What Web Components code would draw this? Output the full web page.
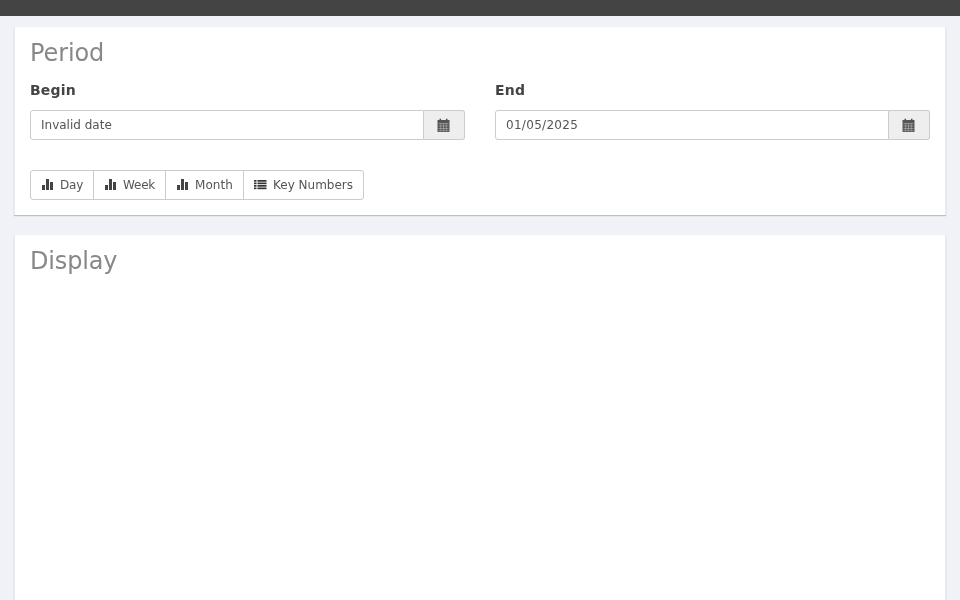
<!DOCTYPE html>
<html>
<head>
<meta charset="utf-8">
<title>Period</title>
<style>
    html, body { margin: 0; height: 100%; overflow: hidden; }
    body {
        background-color: #f1f2f7;
        font-family: "DejaVu Sans", sans-serif;
        color: #444;
    }
    main { display: flex; flex-direction: column; gap: 20px; padding: 11px 15px 0; will-change: transform; }
</style>
</head>
<body>
<top-bar></top-bar>
<main>
    <panel-box heading="Period" style="--heading-spacing:-0.1px">
        <div style="display:grid;grid-template-columns:1fr 1fr;column-gap:30px">
            <date-field label="Begin" value="Invalid date"></date-field>
            <date-field label="End" value="01/05/2025" style="--value-spacing:0.3px"></date-field>
        </div>
        <button-group style="margin-top:30px">
            <group-button icon="bars" style="letter-spacing:-0.2px">Day</group-button>
            <group-button icon="bars" style="letter-spacing:-0.25px">Week</group-button>
            <group-button icon="bars" style="letter-spacing:0.08px">Month</group-button>
            <group-button icon="list">Key Numbers</group-button>
        </button-group>
    </panel-box>
    <panel-box heading="Display" style="height:500px;--heading-spacing:-0.15px"></panel-box>
</main>
<script>
const ICONS = {
    bars: `<svg width="12" height="12" viewBox="0 0 12 12" fill="#444"><rect x="0" y="6" width="3" height="5"/><rect x="4" y="0" width="3" height="11"/><rect x="8" y="3" width="3" height="8"/></svg>`,
    list: `<svg width="12" height="12" viewBox="0 0 12 12" fill="#333" style="overflow:visible"><rect x="-1" y="1" width="2.5" height="1.7"/><rect x="2.5" y="1" width="9" height="1.7"/><rect x="-1" y="3.5" width="2.5" height="1.7"/><rect x="2.5" y="3.5" width="9" height="1.7"/><rect x="-1" y="6" width="2.5" height="1.7"/><rect x="2.5" y="6" width="9" height="1.7"/><rect x="-1" y="8.5" width="2.5" height="1.7"/><rect x="2.5" y="8.5" width="9" height="1.7"/></svg>`,
    calendar: `<svg width="13" height="14" viewBox="0 0 13 14"><path fill="#555" d="M0.5 2h2V0.8h1.6V2h4.8V0.8h1.6V2h2v12H.5z"/><path stroke="#aaa" stroke-width=".7" fill="none" d="M1.5 5.5h10M1.5 8h10M1.5 10.5h10M1.5 12.8h10M3.7 5.5v7.5M6.5 5.5v7.5M9.3 5.5v7.5"/></svg>`
};

class TopBar extends HTMLElement {
    constructor() {
        super();
        this.attachShadow({ mode: 'open' });
        this.shadowRoot.innerHTML = `
            <style>
                :host { display: block; height: 16px; background-color: #444; }
            </style>
        `;
    }
}

class PanelBox extends HTMLElement {
    constructor() {
        super();
        this.attachShadow({ mode: 'open' });
        this.shadowRoot.innerHTML = `
            <style>
                :host {
                    display: block;
                    background-color: #fff;
                    padding: 0 15px 15px;
                    border-left: 1px solid #e9eaef;
                    border-right: 1px solid #e9eaef;
                    margin: 0 -1px;
                    box-shadow: 0 1px 1px rgba(0, 0, 0, 0.22);
                }
                h2 {
                    margin: 0 0 14px;
                    padding-top: 12px;
                    font-size: 24px;
                    line-height: 29px;
                    font-weight: normal;
                    color: #888;
                    letter-spacing: var(--heading-spacing, 0);
                }
            </style>
            <h2>${this.getAttribute('heading')}</h2>
            <slot></slot>
        `;
    }
}

class DateField extends HTMLElement {
    constructor() {
        super();
        this.attachShadow({ mode: 'open' });
        this.shadowRoot.innerHTML = `
            <style>
                :host { display: block; }
                label {
                    display: block;
                    font-size: 14px;
                    font-weight: bold;
                    line-height: 17px;
                    margin-bottom: 11px;
                    letter-spacing: 0.2px;
                    color: #444;
                }
                .row { display: flex; height: 30px; box-sizing: border-box; }
                .value {
                    flex: 1;
                    border: 1px solid #ccc;
                    border-radius: 3px 0 0 3px;
                    padding: 0 10px;
                    font-size: 12px;
                    line-height: 28px;
                    color: #555;
                    background-color: #fff;
                    letter-spacing: var(--value-spacing, 0);
                }
                .addon {
                    width: 39px;
                    padding-right: 1px;
                    border: 1px solid #ccc;
                    border-left: 0;
                    border-radius: 0 3px 3px 0;
                    background-color: #eee;
                    display: flex;
                    align-items: center;
                    justify-content: center;
                }
            </style>
            <label>${this.getAttribute('label')}</label>
            <div class="row">
                <div class="value">${this.getAttribute('value')}</div>
                <div class="addon">${ICONS.calendar}</div>
            </div>
        `;
    }
}

class ButtonGroup extends HTMLElement {
    constructor() {
        super();
        this.attachShadow({ mode: 'open' });
        this.shadowRoot.innerHTML = `
            <style>
                :host {
                    display: inline-flex;
                    border: 1px solid #ccc;
                    border-radius: 3px;
                    height: 30px;
                    box-sizing: border-box;
                    vertical-align: top;
                }
                ::slotted(group-button:not(:last-child)) { border-right: 1px solid #ccc; }
            </style>
            <slot></slot>
        `;
    }
}

class GroupButton extends HTMLElement {
    constructor() {
        super();
        this.attachShadow({ mode: 'open' });
        this.shadowRoot.innerHTML = `
            <style>
                :host {
                    display: flex;
                    align-items: center;
                    gap: 6px;
                    padding: 0 10px 0 11px;
                    font-size: 12px;
                    color: #555;
                }
                svg { display: block; }
            </style>
            ${ICONS[this.getAttribute('icon')]}
            <slot></slot>
        `;
    }
}

customElements.define('top-bar', TopBar);
customElements.define('panel-box', PanelBox);
customElements.define('date-field', DateField);
customElements.define('button-group', ButtonGroup);
customElements.define('group-button', GroupButton);
</script>
</body>
</html>
